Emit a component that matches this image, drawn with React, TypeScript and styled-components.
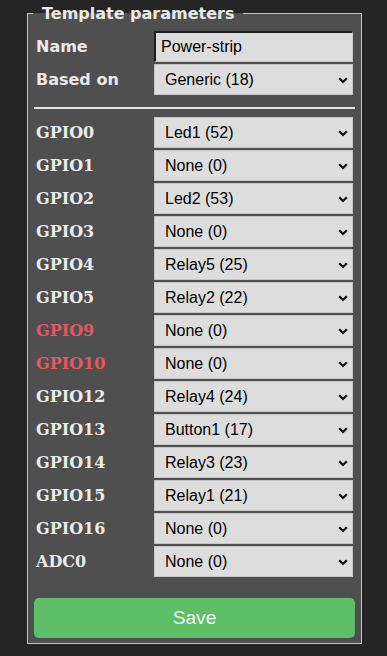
import React from 'react';
import styled, { createGlobalStyle } from 'styled-components';

const GlobalStyle = createGlobalStyle`
  html, body {
    margin: 0;
    padding: 0;
    background: #252525;
  }
`;

const Page = styled.div`
  width: 387px;
  min-height: 656px;
  padding: 0 0 0 27px;
  box-sizing: border-box;
`;

const Fieldset = styled.fieldset`
  width: 335px;
  box-sizing: border-box;
  margin: 4px 0 0;
  padding: 8px 6px 5px;
  border: 1px solid #c4c4c4;
  background: #4f4f4f;
  min-width: 0;
`;

const Legend = styled.legend`
  margin-left: -1px;
  padding: 0 8px 0 9px;
  font-family: 'DejaVu Sans', Verdana, sans-serif;
  font-weight: bold;
  font-size: 16px;
  line-height: 19px;
  color: #eaeaea;
`;

const Grid = styled.div`
  display: grid;
  grid-template-columns: 120px 199px;
  row-gap: 2px;
  align-items: center;
`;

const Label = styled.div<{ $serif?: boolean; $warn?: boolean }>`
  padding-left: 2px;
  font-family: ${(p) =>
    p.$serif ? "'DejaVu Serif', Georgia, serif" : "'DejaVu Sans', Verdana, sans-serif"};
  font-weight: bold;
  font-size: 16px;
  color: ${(p) => (p.$warn ? '#e35863' : '#eaeaea')};
`;

const TextInput = styled.input`
  height: 31px;
  width: 199px;
  box-sizing: border-box;
  margin: 0;
  padding: 0 4px 0 5px;
  border-style: solid;
  border-width: 2px 1px 1px 2px;
  border-color: #1e1e1e #c8c8c8 #c8c8c8 #1e1e1e;
  background: #dddddd;
  color: #000;
  font-family: 'Liberation Sans', Arial, sans-serif;
  font-size: 16px;
  outline: none;
`;

const SelectWrap = styled.div`
  position: relative;
  height: 31px;
`;

const Select = styled.select`
  appearance: none;
  width: 199px;
  height: 31px;
  box-sizing: border-box;
  margin: 0;
  padding: 0 24px 0 10px;
  border: 1px solid #c6c6c6;
  border-radius: 0;
  background: #dddddd;
  color: #000;
  font-family: 'Liberation Sans', Arial, sans-serif;
  font-size: 16px;
  outline: none;
`;

const Chevron = styled.svg`
  position: absolute;
  right: 5px;
  top: 13px;
  pointer-events: none;
`;

const Divider = styled.div`
  height: 2px;
  margin: 12px 0 8px;
  background: #e2e2e2;
`;

const SaveButton = styled.button`
  display: block;
  width: 100%;
  height: 40px;
  margin-top: 21px;
  border: 0;
  border-radius: 5px;
  background: #5ebf68;
  color: #f4f4f4;
  font-family: 'Liberation Sans', Arial, sans-serif;
  font-size: 19.2px;
  cursor: pointer;
`;

const Dropdown = ({ value }: { value: string }) => (
  <SelectWrap>
    <Select defaultValue={value}>
      <option>{value}</option>
    </Select>
    <Chevron width="10" height="7" viewBox="0 0 10 7">
      <polyline points="1.2,1.2 5,5 8.8,1.2" fill="none" stroke="#111" strokeWidth="2.2" />
    </Chevron>
  </SelectWrap>
);

const gpios = [
  { name: 'GPIO0', value: 'Led1 (52)' },
  { name: 'GPIO1', value: 'None (0)' },
  { name: 'GPIO2', value: 'Led2 (53)' },
  { name: 'GPIO3', value: 'None (0)' },
  { name: 'GPIO4', value: 'Relay5 (25)' },
  { name: 'GPIO5', value: 'Relay2 (22)' },
  { name: 'GPIO9', value: 'None (0)', warn: true },
  { name: 'GPIO10', value: 'None (0)', warn: true },
  { name: 'GPIO12', value: 'Relay4 (24)' },
  { name: 'GPIO13', value: 'Button1 (17)' },
  { name: 'GPIO14', value: 'Relay3 (23)' },
  { name: 'GPIO15', value: 'Relay1 (21)' },
  { name: 'GPIO16', value: 'None (0)' },
  { name: 'ADC0', value: 'None (0)' },
];

const App = () => {
  return (
    <Page>
      <GlobalStyle />
      <Fieldset>
        <Legend>Template parameters</Legend>
        <Grid>
          <Label>Name</Label>
          <TextInput defaultValue="Power-strip" />
          <Label>Based on</Label>
          <Dropdown value="Generic (18)" />
        </Grid>
        <Divider />
        <Grid>
          {gpios.map((g) => (
            <React.Fragment key={g.name}>
              <Label $serif $warn={g.warn}>
                {g.name}
              </Label>
              <Dropdown value={g.value} />
            </React.Fragment>
          ))}
        </Grid>
        <SaveButton>Save</SaveButton>
      </Fieldset>
    </Page>
  );
};

export default App;
